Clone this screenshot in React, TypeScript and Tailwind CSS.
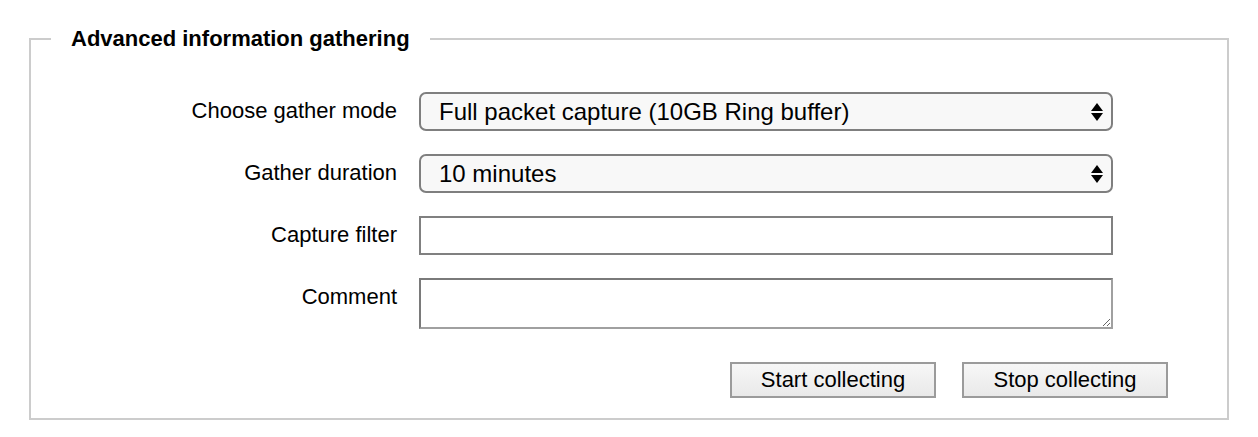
import { useState } from "react";

function Arrows() {
  return (
    <svg width="14" height="20" viewBox="0 0 14 20" className="pointer-events-none absolute right-[9px] top-1/2 -translate-y-1/2">
      <path d="M7 1 L13 9 L1 9 Z" fill="#000" />
      <path d="M1 11 L13 11 L7 19 Z" fill="#000" />
    </svg>
  );
}

function Select({ value, options }: { value: string; options: string[] }) {
  const [v, setV] = useState(value);
  return (
    <div className="relative w-[694px]">
      <select
        value={v}
        onChange={(e) => setV(e.target.value)}
        className="block h-[39px] w-full appearance-none rounded-[7px] border-2 border-[#7f7f7f] bg-[#f8f8f8] pl-[18px] text-[24px] text-black outline-none"
      >
        {options.map((o) => (
          <option key={o}>{o}</option>
        ))}
      </select>
      <Arrows />
    </div>
  );
}

function Row({ label, children }: { label: string; children: React.ReactNode }) {
  return (
    <div className="flex items-start">
      <label className="w-[366px] pt-[6px] text-right text-[22px] leading-[26px]">{label}</label>
      <div className="ml-[22px]">{children}</div>
    </div>
  );
}

export default function App() {
  return (
    <div className="bg-white pl-[29px] pt-[26px] font-['Liberation_Sans',Arial,sans-serif] text-black" style={{ height: 437 }}>
      <fieldset className="w-[1200px] border-2 border-[#cccccc] pb-[20px]">
        <legend className="ml-[20px] px-[20px] text-[22px] font-bold leading-[25px]">Advanced information gathering</legend>

        <div className="mt-[41px] flex flex-col gap-[23px]">
          <Row label="Choose gather mode">
            <Select
              value="Full packet capture (10GB Ring buffer)"
              options={["Full packet capture (10GB Ring buffer)", "Headers only", "Flow statistics"]}
            />
          </Row>
          <Row label="Gather duration">
            <Select value="10 minutes" options={["1 minute", "5 minutes", "10 minutes", "30 minutes"]} />
          </Row>
          <Row label="Capture filter">
            <input
              type="text"
              className="block h-[39px] w-[694px] border-2 border-[#808080] bg-white px-2 text-[20px] outline-none"
            />
          </Row>
          <Row label="Comment">
            <textarea className="block h-[51px] w-[694px] border-2 border-t-[#7a7a7a] border-l-[#7a7a7a] border-r-[#a0a0a0] border-b-[#a0a0a0] bg-white px-2 text-[20px] outline-none" />
          </Row>
        </div>

        <div className="mt-[33px] flex justify-end gap-[26px] pr-[59px]">
          <button className="h-[36px] w-[206px] border-2 border-[#9b9b9b] bg-gradient-to-b from-[#f7f7f7] to-[#e9e9e9] text-[22px] leading-none">
            Start collecting
          </button>
          <button className="h-[36px] w-[206px] border-2 border-[#9b9b9b] bg-gradient-to-b from-[#f7f7f7] to-[#e9e9e9] text-[22px] leading-none">
            Stop collecting
          </button>
        </div>
      </fieldset>
    </div>
  );
}
